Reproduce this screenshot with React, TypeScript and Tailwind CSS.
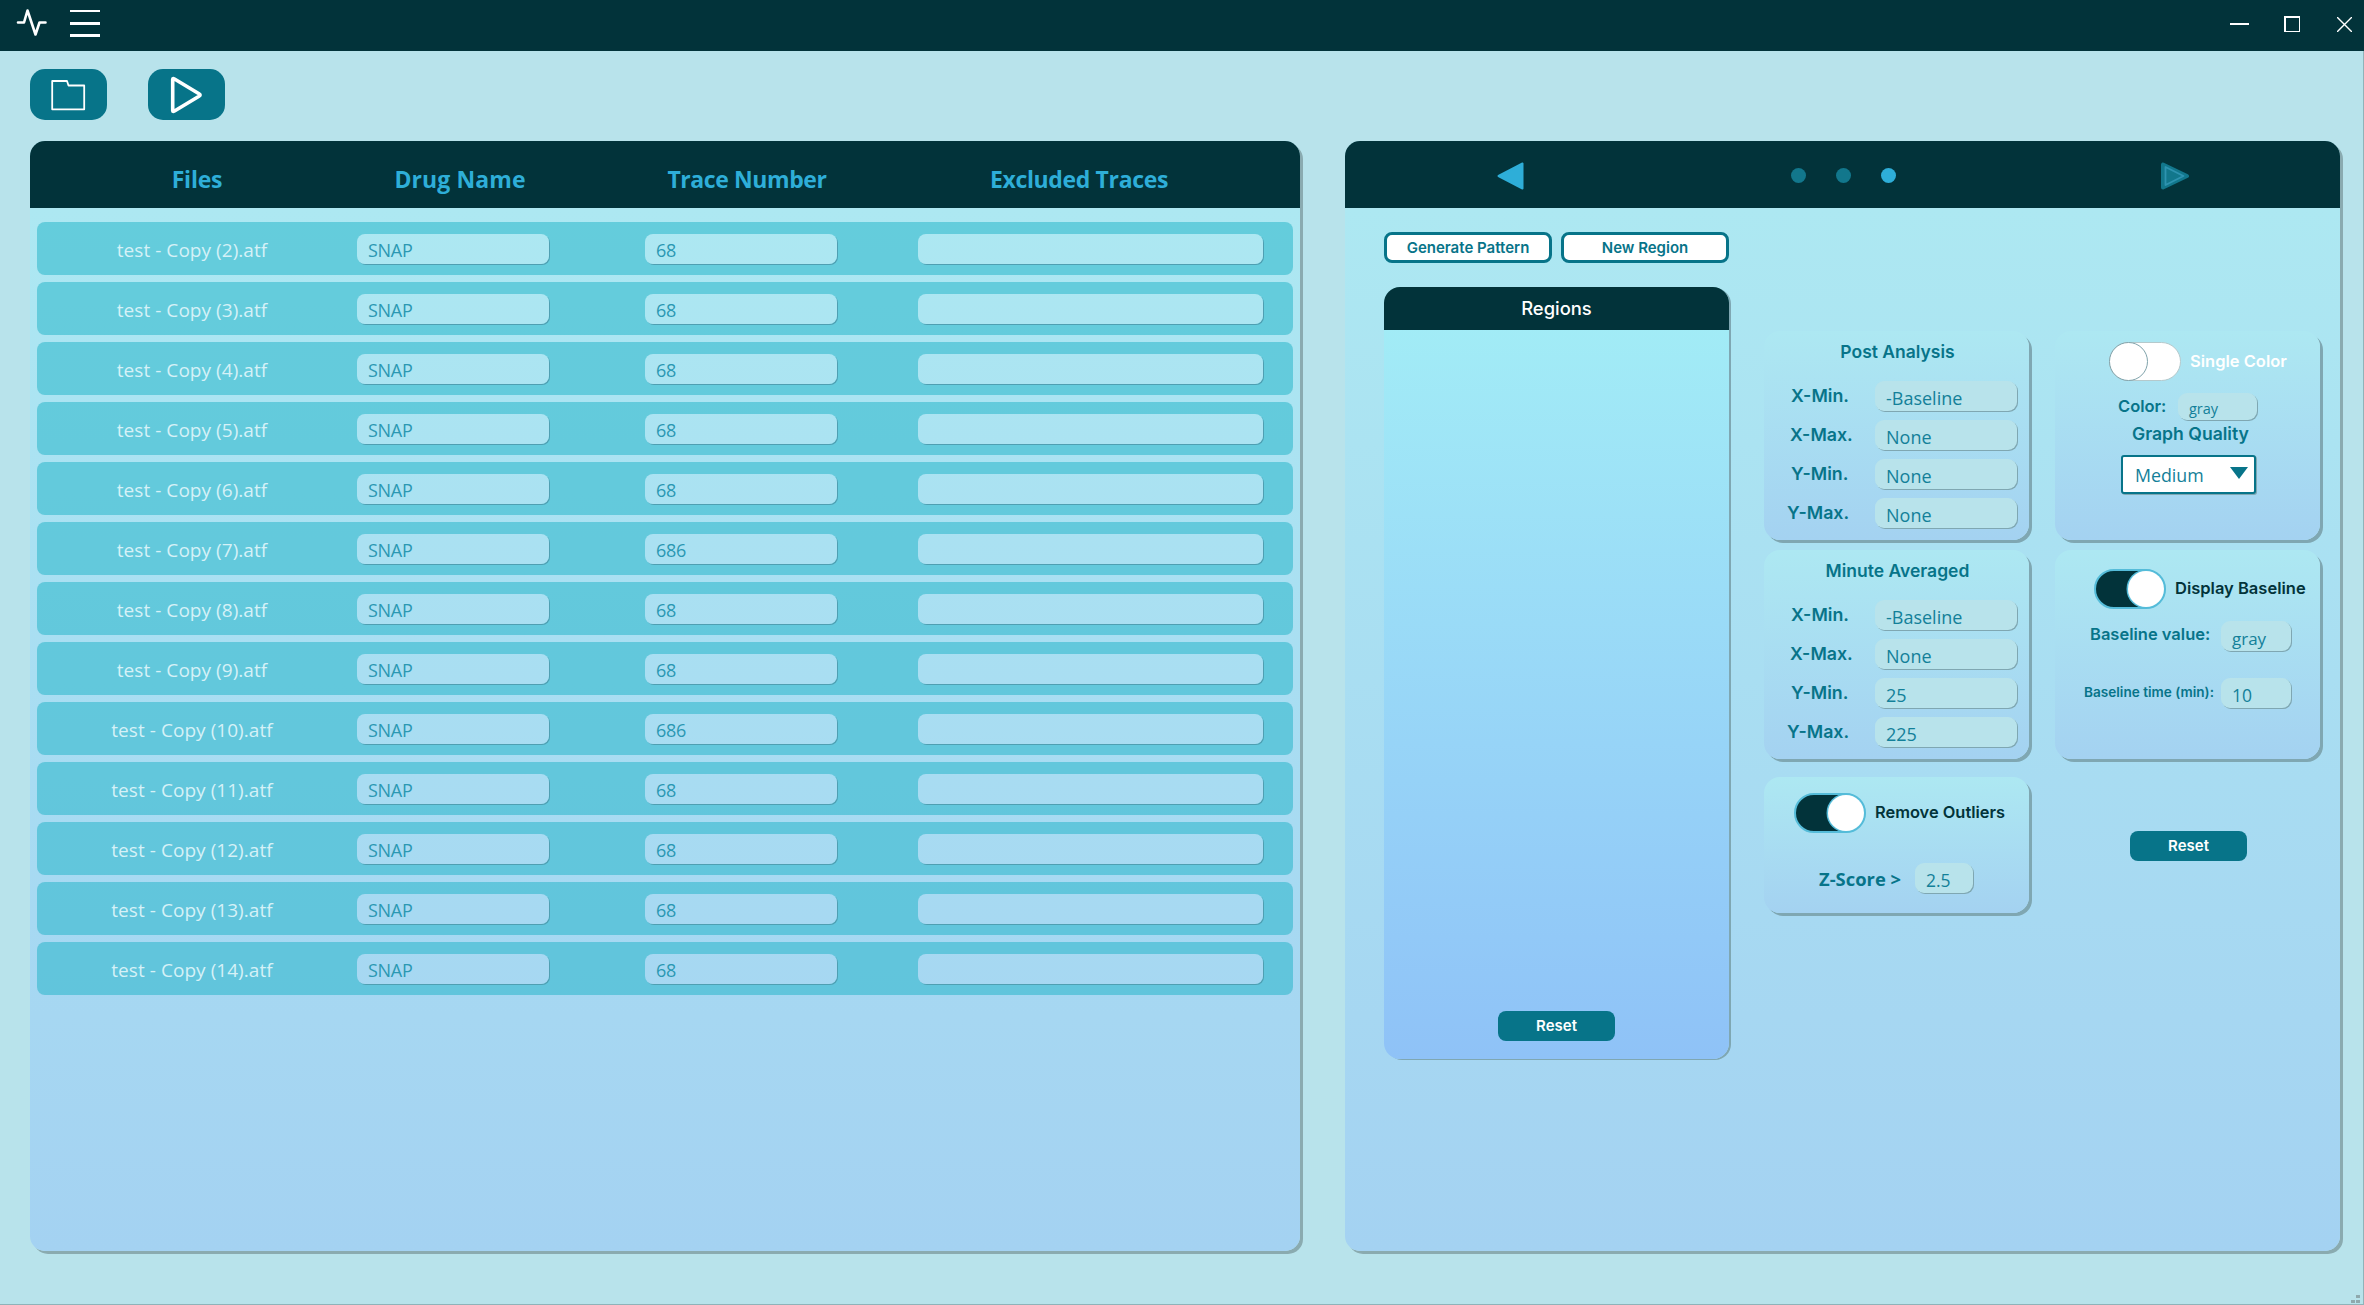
import type { ReactNode } from "react";

const files = [
  ["test - Copy (2).atf", "68"],
  ["test - Copy (3).atf", "68"],
  ["test - Copy (4).atf", "68"],
  ["test - Copy (5).atf", "68"],
  ["test - Copy (6).atf", "68"],
  ["test - Copy (7).atf", "686"],
  ["test - Copy (8).atf", "68"],
  ["test - Copy (9).atf", "68"],
  ["test - Copy (10).atf", "686"],
  ["test - Copy (11).atf", "68"],
  ["test - Copy (12).atf", "68"],
  ["test - Copy (13).atf", "68"],
  ["test - Copy (14).atf", "68"],
];

const panelGradient =
  "bg-fixed bg-[linear-gradient(to_bottom,#ade8f2_208px,#a4d2f2_1251px)]";

function TitleBar() {
  return (
    <header className="flex h-[51px] shrink-0 items-start bg-[#02333a]">
      <svg className="ml-[15px] mt-2 h-[30px] w-8" viewBox="0 0 32 30" fill="none" stroke="#fff" strokeWidth="2.6" strokeLinecap="round" strokeLinejoin="round">
        <path d="M3 14.500h6L12.500 2.500 20.500 26.500 24.500 14.500h6" />
      </svg>
      <svg className="ml-[23px] mt-[10px] h-[27px] w-[30px]" viewBox="0 0 30 27" fill="#fff">
        <rect width="30" height="2" />
        <rect y="12" width="30" height="3" />
        <rect y="24" width="30" height="3" />
      </svg>
      <div className="ml-auto mr-3 mt-4 flex h-4 items-center">
        <div className="mr-[35px] h-0.5 w-[19px] bg-white" />
        <div className="mr-[37px] size-4 border-2 border-r border-b border-white" />
        <svg className="size-[15px]" viewBox="0 0 15 15" stroke="#fff" strokeWidth="1.4">
          <path d="M0 0 15 15M15 0 0 15" />
        </svg>
      </div>
    </header>
  );
}

function Field({ value, className }: { value: string; className: string }) {
  return (
    <div className={`flex shrink-0 items-center rounded-[9px] bg-[#b8e3eb] pl-[11px] pt-[5px] font-['Open_Sans','Noto_Sans',sans-serif] font-normal text-[#138099] shadow-[1px_1px_0_#7fa7b2] ${className}`}>
      {value}
    </div>
  );
}

function RowInput({ value, className }: { value?: string; className: string }) {
  return (
    <div className={`flex h-[30px] items-center rounded-lg pl-[11px] pt-[2px] text-[18px] text-[#2b98b2] shadow-[1px_1px_0_#4f9fb2] ${panelGradient} ${className}`}>
      <span className="tracking-[-0.3px]">{value}</span>
    </div>
  );
}

function FilesPanel() {
  return (
    <section className={`h-[1110px] w-[1270px] overflow-hidden rounded-[15px] font-['Open_Sans','Noto_Sans',sans-serif] ${panelGradient}`}>
      <div className="flex h-[67px] items-center bg-[#02333a] pt-[10px] text-center text-[23px] font-bold tracking-[-0.2px] text-[#2eaed8]">
        <div className="w-[334px]">Files</div>
        <div className="w-[192px] tracking-[0.1px]">Drug Name</div>
        <div className="w-[382px] tracking-[-0.4px]">Trace Number</div>
        <div className="w-[282px] tracking-[-0.35px]">Excluded Traces</div>
      </div>
      <div className="flex flex-col gap-[7px] px-[7px] pt-[14px]">
        {files.map(([name, trace]) => (
          <div key={name} className="flex h-[53px] items-center rounded-lg bg-[#1bb1c680] pt-[1px]">
            <div className="w-[310px] pt-[2px] text-center text-[19px] tracking-[0.05px] text-[#d5f1f7]">{name}</div>
            <RowInput value="SNAP" className="ml-[10px] w-[192px]" />
            <RowInput value={trace} className="ml-[96px] w-[192px]" />
            <RowInput className="ml-[81px] w-[345px]" />
          </div>
        ))}
      </div>
    </section>
  );
}

function Card({ children, className }: { children: ReactNode; className: string }) {
  return (
    <div className={`w-[265px] rounded-[16px] bg-linear-to-b from-[#ade8f2] to-[#a4d2f1] shadow-[3px_3px_0_#7fa7b2] ${className}`}>
      {children}
    </div>
  );
}

function Toggle({ on }: { on: boolean }) {
  return on ? (
    <div className="flex h-10 w-[72px] shrink-0 justify-end rounded-full border-2 border-[#55bcd9] bg-[#02333a]">
      <div className="-ml-0.5 size-9 rounded-full bg-white shadow-[0_0_0_1.5px_#55bcd9]" />
    </div>
  ) : (
    <div className="flex h-[39px] w-[72px] shrink-0 items-center rounded-full border border-[#b5c9cc] bg-white">
      <div className="-ml-px size-[39px] shrink-0 rounded-full border-[1.5px] border-[#80a3ab] bg-white" />
    </div>
  );
}

function AxisCard({ title, values, className }: { title: string; values: string[]; className: string }) {
  const labels = ["X-Min.", "X-Max.", "Y-Min.", "Y-Max."];
  const offsets = ["pl-[27px]", "pl-[26px]", "pl-[27px]", "pl-[23px]"];
  return (
    <Card className={className}>
      <div className="flex h-[42px] items-center justify-center pl-[2px] pt-px text-[17.5px]">{title}</div>
      <div className="flex flex-col gap-[9px] pt-[8px]">
        {labels.map((label, i) => (
          <div key={label} className="flex h-[30px]">
            <div className={`w-[111px] text-[17.8px] leading-[30px] ${offsets[i]}`}>{label}</div>
            <Field value={values[i]} className="h-[30px] w-[142px] text-[18px]" />
          </div>
        ))}
      </div>
    </Card>
  );
}

function ResetButton({ className }: { className: string }) {
  return (
    <button className={`h-[30px] w-[117px] rounded-lg bg-[#077489] pb-[1px] text-[15px] leading-none text-white ${className}`}>
      Reset
    </button>
  );
}

function SettingsPanel() {
  return (
    <section className={`h-[1110px] w-[995px] rounded-[15px] ${panelGradient}`}>
      <div className="flex h-[67px] items-center rounded-t-[15px] bg-[#02333a] pl-[152px] pt-[2px]">
        <svg className="h-7 w-[27px]" viewBox="0 0 27 28" fill="#2eaed8" stroke="#2eaed8" strokeWidth="2" strokeLinejoin="round">
          <path d="M1.500 14 25.500 1.500V26.500Z" />
        </svg>
        <div className="ml-[267px] flex gap-[30px]">
          <div className="size-[15px] rounded-full bg-[#12778c]" />
          <div className="size-[15px] rounded-full bg-[#12778c]" />
          <div className="size-[15px] rounded-full bg-[#2eaed8]" />
        </div>
        <svg className="ml-[265px] h-7 w-7" viewBox="0 0 28 28" fill="#12778c" strokeLinejoin="round">
          <path d="M2 2.500V25.500L26 14Z" stroke="#12778c" strokeWidth="4" />
          <path d="M4.500 5V23L22.500 14Z" stroke="#2e93b0" strokeWidth="1.800" />
        </svg>
      </div>
      <div className="flex pl-[39px] pt-6 font-['Inter',sans-serif] font-semibold text-[#077489]">
        <div className="w-[345px]">
          <div className="flex justify-between text-[15px]">
            <button className="h-[31px] w-[168px] rounded-lg border-[3px] border-[#077489] bg-white pb-[1px] leading-none">Generate Pattern</button>
            <button className="h-[31px] w-[168px] rounded-lg border-[3px] border-[#077489] bg-white pb-[1px] leading-none">New Region</button>
          </div>
          <div className="mt-[24px] flex h-[772px] flex-col overflow-hidden rounded-[16px] bg-linear-to-b from-[#a3eef6] to-[#8fc2f7] shadow-[2px_1px_0_#7fa7b2]">
            <div className="flex h-[43px] items-center justify-center bg-[#02333a] text-[18.4px] font-medium text-white">Regions</div>
            <ResetButton className="mx-auto mb-[18px] mt-auto" />
          </div>
        </div>

        <div className="ml-[35px] pt-[99px]">
          <AxisCard title="Post Analysis" values={["-Baseline", "None", "None", "None"]} className="h-[209px]" />
          <AxisCard title="Minute Averaged" values={["-Baseline", "None", "25", "225"]} className="mt-[10px] h-[209px]" />
          <Card className="mt-[18px] h-[136px] pt-4">
            <div className="flex items-center pl-[30px]">
              <Toggle on />
              <span className="ml-[9px] pb-[2px] text-[16.4px] text-[#02333a]">Remove Outliers</span>
            </div>
            <div className="mt-[30px] flex items-center pl-[55px]">
              <span className="w-[96px] pt-px font-['Open_Sans','Noto_Sans',sans-serif] text-[18.4px] font-bold">Z-Score &gt;</span>
              <Field value="2.5" className="h-[30px] w-[58px] text-[17.5px]" />
            </div>
          </Card>
        </div>

        <div className="ml-[26px] pt-[99px]">
          <Card className="h-[209px] pt-[11px]">
            <div className="flex items-center pl-[54px]">
              <Toggle on={false} />
              <span className="ml-[9px] text-[16.5px] text-white">Single Color</span>
            </div>
            <div className="mt-[12px] flex items-center pl-[63px]">
              <span className="w-[60px] pb-[1px] text-[16.5px] leading-none">Color:</span>
              <Field value="gray" className="h-[27px] w-[79px] text-[14.5px]" />
            </div>
            <div className="mt-[4px] pl-[77px] text-[17.6px] leading-[20px]">Graph Quality</div>
            <div className="ml-[66px] mt-[11px] flex h-[39px] w-[135px] items-center justify-between rounded-[3px] border-2 border-[#077489] bg-white pl-3 pr-[6px] pt-px font-['Open_Sans','Noto_Sans',sans-serif] text-[17.8px] font-normal text-[#138099] shadow-[1px_1px_0_#7fa7b2]">
              Medium
              <svg className="mb-1 h-3 w-[18px]" viewBox="0 0 18 12" fill="#077489">
                <path d="M0 0H18L9 12Z" />
              </svg>
            </div>
          </Card>
          <Card className="mt-[10px] h-[209px] pt-[19px]">
            <div className="flex items-center pl-[39px]">
              <Toggle on />
              <span className="ml-[9px] pb-[2px] text-[16.5px] text-[#02333a]">Display Baseline</span>
            </div>
            <div className="mt-[12px] flex items-center pl-[35px]">
              <span className="w-[131px] pb-[3px] text-[16.5px] leading-none">Baseline value:</span>
              <Field value="gray" className="h-[30px] w-[70px] text-[17px]" />
            </div>
            <div className="mt-[27px] flex items-center pl-[29px]">
              <span className="w-[137px] text-[13.6px] leading-none">Baseline time (min):</span>
              <Field value="10" className="h-[30px] w-[70px] text-[17.5px]" />
            </div>
          </Card>
          <ResetButton className="ml-[75px] mt-[72px]" />
        </div>
      </div>
    </section>
  );
}

export default function App() {
  return (
    <div className="relative flex h-[1305px] w-[2364px] flex-col overflow-hidden bg-[#b8e3eb]">
      <TitleBar />
      <div className="flex grow flex-col border-r border-b border-[#8fb3b9]">
        <div className="flex gap-[41px] pl-[30px] pt-[18px]">
          <button className="flex h-[51px] w-[77px] items-center justify-center rounded-[15px] bg-[#077489]">
            <svg className="h-8 w-9" viewBox="0 0 36 32" fill="none" stroke="#fff" strokeWidth="1.800" strokeLinejoin="round">
              <path d="M1.200 2H16L17.500 6.500H33.200V30.300H1.200Z" />
            </svg>
          </button>
          <button className="flex h-[51px] w-[77px] items-center justify-center rounded-[15px] bg-[#077489]">
            <svg className="h-[38px] w-[34px]" viewBox="0 0 34 38" fill="none" stroke="#fff" strokeWidth="3.600" strokeLinejoin="round">
              <path d="M2.700 3.200C2.700 2.500 3.500 2.500 4.500 3L29 17.800C30.500 18.700 30.500 19.300 29 20.200L4.500 35C3.500 35.500 2.700 35.500 2.700 34.800Z" />
            </svg>
          </button>
        </div>
        <main className="flex gap-[45px] pl-[30px] pt-[21px]">
          <div className="rounded-[15px] shadow-[3px_3px_0_#8aabb0]">
            <FilesPanel />
          </div>
          <div className="rounded-[15px] shadow-[3px_3px_0_#8aabb0]">
            <SettingsPanel />
          </div>
        </main>
      </div>
      <svg className="absolute bottom-[2px] right-1 h-2 w-[9px]" viewBox="0 0 9 8" fill="#8fa9ad">
        <rect x="5" width="4" height="3" />
        <rect y="5" width="4" height="3" />
        <rect x="5" y="5" width="4" height="3" />
      </svg>
    </div>
  );
}
